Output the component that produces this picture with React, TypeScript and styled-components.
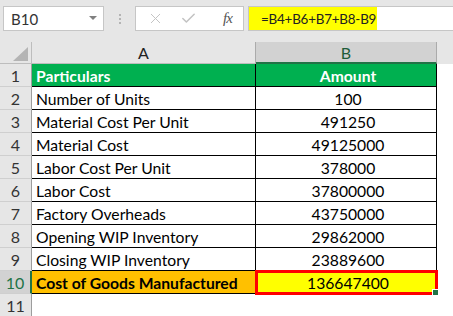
import React from 'react';
import styled, { createGlobalStyle } from 'styled-components';
import { X, Check } from 'lucide-react';

const GlobalStyle = createGlobalStyle`
    body {
        margin: 0;
        background: #ffffff;
        font-family: Lato, "Liberation Sans", sans-serif;
    }
`;

type Row = {
    label: string;
    value: string;
    kind?: 'head' | 'total';
};

const rows: Row[] = [
    { label: 'Particulars', value: 'Amount', kind: 'head' },
    { label: 'Number of Units', value: '100' },
    { label: 'Material Cost Per Unit', value: '491250' },
    { label: 'Material Cost', value: '49125000' },
    { label: 'Labor Cost Per Unit', value: '378000' },
    { label: 'Labor Cost', value: '37800000' },
    { label: 'Factory Overheads', value: '43750000' },
    { label: 'Opening WIP Inventory', value: '29862000' },
    { label: 'Closing WIP Inventory', value: '23889600' },
    { label: 'Cost of Goods Manufactured', value: '136647400', kind: 'total' },
];

const App: React.FC = () => {
    return (
        <Sheet>
            <GlobalStyle />
            <Toolbar>
                <NameBox>
                    <NameText>B10</NameText>
                    <Caret />
                </NameBox>
                <Grip>
                    <i />
                    <i />
                    <i />
                </Grip>
                <FxBox>
                    <X size={17} strokeWidth={1.4} color="#c3c3c3" />
                    <Check size={17} strokeWidth={2.2} color="#c3c3c3" />
                    <FxText>fx</FxText>
                </FxBox>
                <FormulaBox>
                    <Formula>=B4+B6+B7+B8-B9</Formula>
                </FormulaBox>
            </Toolbar>
            <Grid>
                <Corner />
                <ColHeader>A</ColHeader>
                <ColHeader $selected>B</ColHeader>
                <HeaderFill />
                {rows.map((r, i) => (
                    <React.Fragment key={i}>
                        <RowHeader $selected={r.kind === 'total'}>{i + 1}</RowHeader>
                        <Cell
                            $bg={r.kind === 'head' ? '#00b050' : r.kind === 'total' ? '#ffc000' : '#ffffff'}
                            $color={r.kind === 'head' ? '#ffffff' : '#000000'}
                            $bold={!!r.kind}
                        >
                            {r.label}
                        </Cell>
                        <Cell
                            $center
                            $bg={r.kind === 'head' ? '#00b050' : r.kind === 'total' ? '#ffff00' : '#ffffff'}
                            $color={r.kind === 'head' ? '#ffffff' : '#000000'}
                            $bold={r.kind === 'head'}
                            $active={r.kind === 'total'}
                        >
                            {r.value}
                        </Cell>
                        <Blank />
                    </React.Fragment>
                ))}
                <RowHeader>11</RowHeader>
                <Blank />
                <Blank />
                <Blank />
            </Grid>
        </Sheet>
    );
};

const Sheet = styled.div`
    width: 453px;
    height: 316px;
    overflow: hidden;
    background: #ffffff;
`;

const Toolbar = styled.div`
    display: flex;
    align-items: flex-start;
    height: 42px;
    padding: 6px 0 0 3px;
    box-sizing: border-box;
    background: #e6e6e6;
`;

const NameBox = styled.div`
    display: flex;
    align-items: center;
    justify-content: space-between;
    width: 101px;
    height: 25px;
    box-sizing: border-box;
    padding: 0 6px 0 7px;
    background: #ffffff;
    border: 1px solid #c6c6c6;
`;

const NameText = styled.span`
    font-size: 15px;
    color: #333333;
`;

const Caret = styled.span`
    width: 0;
    height: 0;
    border-left: 4px solid transparent;
    border-right: 4px solid transparent;
    border-top: 4px solid #808080;
    margin-top: -2px;
`;

const Grip = styled.div`
    display: flex;
    flex-direction: column;
    gap: 2px;
    width: 31px;
    align-items: center;
    padding-top: 8px;

    i {
        display: block;
        width: 2px;
        height: 2px;
        background: #b4b4b4;
    }
`;

const FxBox = styled.div`
    display: flex;
    align-items: center;
    gap: 16px;
    width: 109px;
    height: 25px;
    box-sizing: border-box;
    padding: 0 0 0 11px;
    background: #ffffff;
    border: 1px solid #c6c6c6;
`;

const FxText = styled.span`
    font-family: "Liberation Serif", "Times New Roman", serif;
    font-style: italic;
    font-size: 15px;
    color: #555555;
    margin-left: 10px;
    letter-spacing: -1px;
`;

const FormulaBox = styled.div`
    flex: 1;
    height: 25px;
    margin-left: 4px;
    box-sizing: border-box;
    background: #ffffff;
    border: 1px solid #c6c6c6;
    border-right: none;
    display: flex;
`;

const Formula = styled.span`
    display: flex;
    align-items: center;
    width: 128px;
    box-sizing: border-box;
    padding-left: 12px;
    background: #ffff00;
    font-size: 13.4px;
    letter-spacing: -0.2px;
    white-space: nowrap;
    color: #222222;
`;

const Grid = styled.div`
    display: grid;
    grid-template-columns: 32px 224px 181px 1fr;
    grid-template-rows: 22px;
    grid-auto-rows: 23px;
`;

const Corner = styled.div`
    position: relative;
    background: #e6e6e6;
    border-right: 1px solid #bdbdbd;
    border-bottom: 1px solid #bdbdbd;
    box-sizing: border-box;

    &::after {
        content: '';
        position: absolute;
        right: 3px;
        bottom: 2px;
        width: 0;
        height: 0;
        border-left: 15px solid transparent;
        border-bottom: 14px solid #b4b4b4;
    }
`;

const ColHeader = styled.div<{ $selected?: boolean }>`
    display: flex;
    align-items: center;
    justify-content: center;
    box-sizing: border-box;
    font-size: 16px;
    background: ${(p) => (p.$selected ? '#d2d2d2' : '#e6e6e6')};
    color: ${(p) => (p.$selected ? '#1f5c3a' : '#222222')};
    border-bottom: ${(p) => (p.$selected ? '2px solid #217346' : '1px solid #bdbdbd')};
    border-right: 1px solid #ababab;
`;

const HeaderFill = styled.div`
    background: #e6e6e6;
`;

const RowHeader = styled.div<{ $selected?: boolean }>`
    display: flex;
    align-items: center;
    justify-content: center;
    box-sizing: border-box;
    font-size: 16px;
    background: ${(p) => (p.$selected ? '#d2d2d2' : '#e6e6e6')};
    color: ${(p) => (p.$selected ? '#217346' : '#333333')};
    border-bottom: 1px solid #cfcfcf;
    border-right: ${(p) => (p.$selected ? '2px solid #217346' : '1px solid #9d9d9d')};
`;

const Cell = styled.div<{ $bg: string; $color: string; $bold?: boolean; $center?: boolean; $active?: boolean }>`
    position: relative;
    display: flex;
    align-items: center;
    justify-content: ${(p) => (p.$center ? 'center' : 'flex-start')};
    box-sizing: border-box;
    padding: 1px 0 0 4px;
    font-size: 15.7px;
    white-space: nowrap;
    background: ${(p) => p.$bg};
    color: ${(p) => p.$color};
    font-weight: ${(p) => (p.$bold ? 700 : 400)};
    border-right: 1px solid #000000;
    border-bottom: 1px solid #000000;
    outline: ${(p) => (p.$active ? '3px solid #ff0000' : 'none')};
    outline-offset: -2px;

    &::after {
        content: '';
        display: ${(p) => (p.$active ? 'block' : 'none')};
        position: absolute;
        right: -3px;
        bottom: -3px;
        width: 5px;
        height: 5px;
        background: #217346;
        border: 1px solid #ffffff;
    }
`;

const Blank = styled.div`
    background: #ffffff;
`;

export default App;
